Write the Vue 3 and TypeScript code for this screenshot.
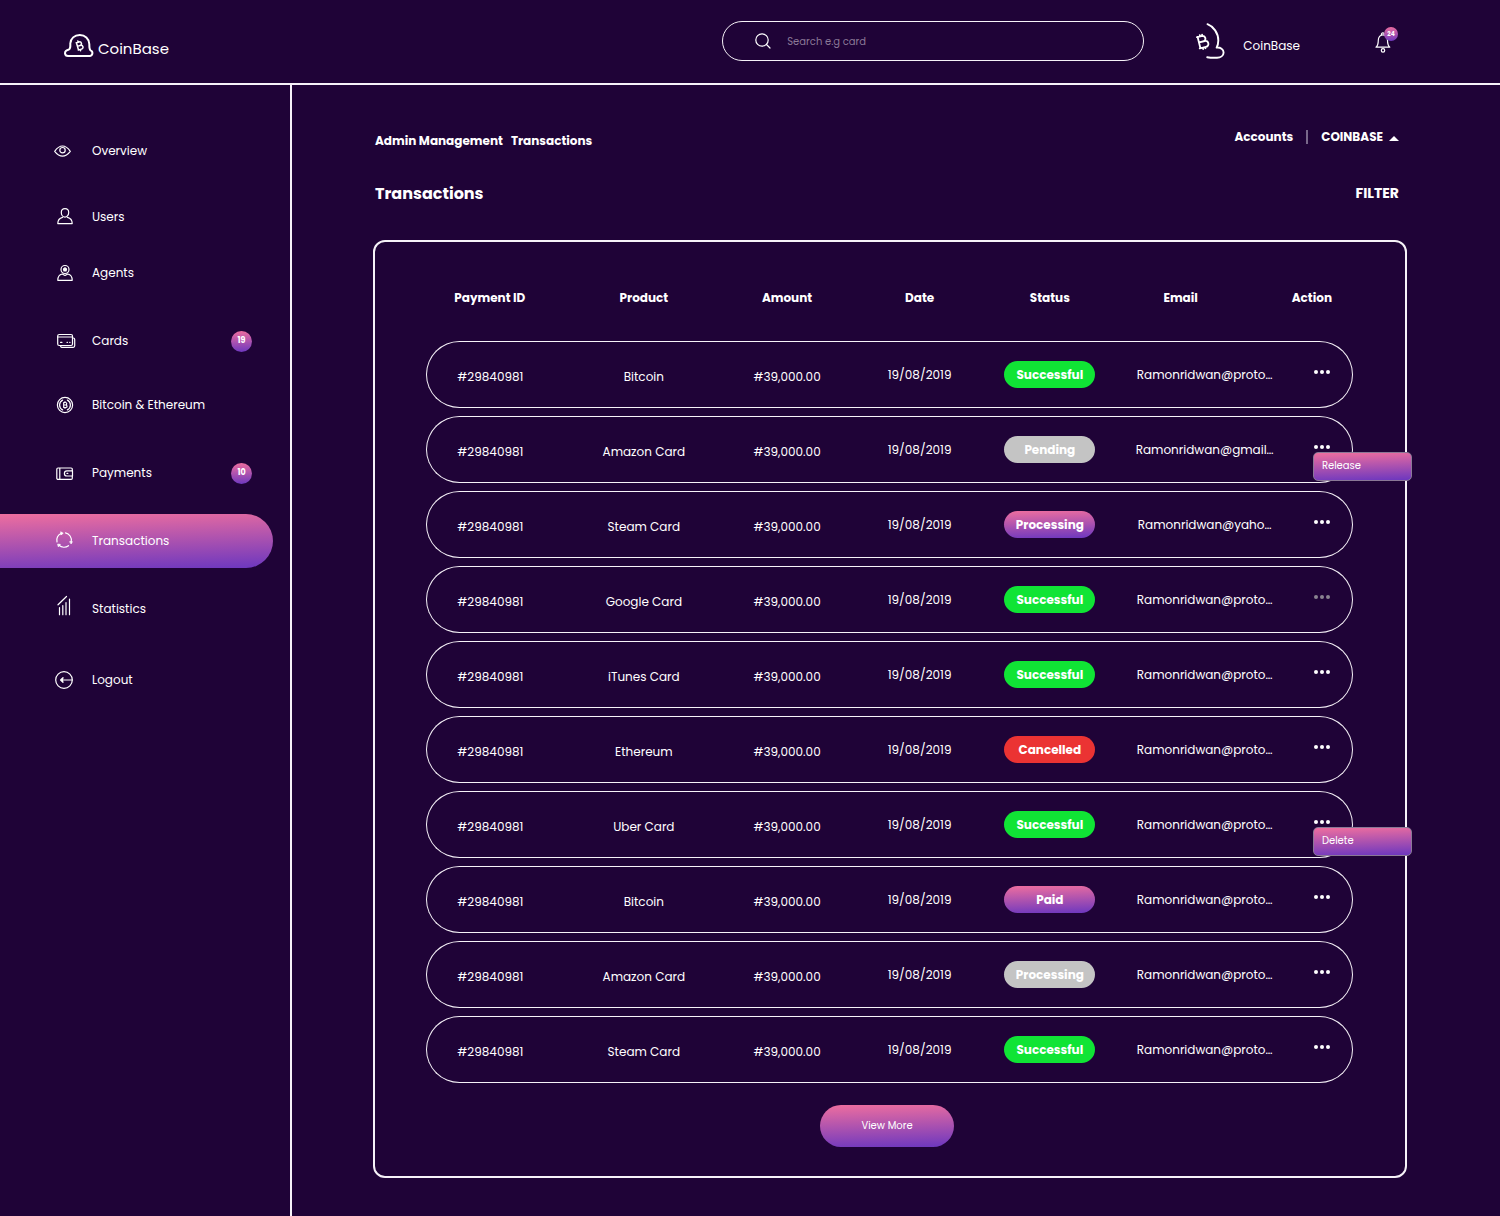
<script setup lang="ts">
import { ref } from 'vue'

type Gap = 'none' | 'tight' | 'snug' | 'normal' | 'wide' | 'far'
type Tone = 'green' | 'grey' | 'brand' | 'red'

interface NavItem {
  id: string
  label: string
  gap: Gap
  count?: number
}

interface Transaction {
  product: string
  status: string
  tone: Tone
  email?: string
  dim?: boolean
  menu?: string
}

const navItems: NavItem[] = [
  { id: 'overview', label: 'Overview', gap: 'none' },
  { id: 'users', label: 'Users', gap: 'normal' },
  { id: 'agents', label: 'Agents', gap: 'tight' },
  { id: 'cards', label: 'Cards', gap: 'wide', count: 19 },
  { id: 'bitcoin', label: 'Bitcoin & Ethereum', gap: 'snug' },
  { id: 'payments', label: 'Payments', gap: 'wide', count: 10 },
  { id: 'transactions', label: 'Transactions', gap: 'wide' },
  { id: 'statistics', label: 'Statistics', gap: 'wide' },
  { id: 'logout', label: 'Logout', gap: 'far' },
]

const active = ref('transactions')
const search = ref('')

const columns = ['Payment ID', 'Product', 'Amount', 'Date', 'Status', 'Email', 'Action']

const rows: Transaction[] = [
  { product: 'Bitcoin', status: 'Successful', tone: 'green' },
  { product: 'Amazon Card', status: 'Pending', tone: 'grey', email: 'Ramonridwan@gmail…', menu: 'Release' },
  { product: 'Steam Card', status: 'Processing', tone: 'brand', email: 'Ramonridwan@yaho…' },
  { product: 'Google Card', status: 'Successful', tone: 'green', dim: true },
  { product: 'iTunes Card', status: 'Successful', tone: 'green' },
  { product: 'Ethereum', status: 'Cancelled', tone: 'red' },
  { product: 'Uber Card', status: 'Successful', tone: 'green', menu: 'Delete' },
  { product: 'Bitcoin', status: 'Paid', tone: 'brand' },
  { product: 'Amazon Card', status: 'Processing', tone: 'grey' },
  { product: 'Steam Card', status: 'Successful', tone: 'green' },
]
</script>

<template>
  <div class="app">
    <header class="topbar">
      <a class="logo" href="#">
        <svg width="30" height="24" viewBox="0 0 30 24" fill="none" stroke="currentColor" stroke-linecap="round" stroke-linejoin="round" aria-hidden="true">
          <path stroke-width="2" d="M4 22H26A3 3 0 0 0 26.6 16.3C25 15.4 25.5 13 25.3 10C25 4.5 21 1 15.8 1C10.5 1 6.5 4.5 6.3 9.5C6.3 11.5 6.8 14.500 5 15.500C2.500 16 1 17.500 1 19.300C1.200 21 2.500 22 4 22Z" />
          <g transform="translate(15.400 11.800) rotate(-16)" stroke-width="1.500">
            <path d="M-2.200 -3.800H.8A1.800 1.800 0 0 1 .8 -.1H-1.600H1.200A1.900 1.900 0 0 1 1.200 3.800H-2.200M-2 -3.800V3.800M-.2 -5V-3.800M-.2 3.800V5" />
          </g>
        </svg>
        <span>CoinBase</span>
      </a>

      <form class="search" role="search" @submit.prevent>
        <label for="search" aria-label="Search">
          <svg width="16" height="16" viewBox="0 0 16 16" fill="none" stroke="currentColor" stroke-width="1.2" stroke-linecap="round" aria-hidden="true">
            <circle cx="7" cy="7" r="6.2" />
            <path d="M11.5 11.5L15 15" />
          </svg>
        </label>
        <input id="search" v-model="search" type="search" placeholder="Search e.g card" />
      </form>

      <a class="profile" href="#">
        <svg width="29" height="36" viewBox="0 0 29 36" fill="none" stroke="currentColor" stroke-linecap="round" stroke-linejoin="round" aria-hidden="true">
          <path stroke-width="1.9" d="M11.500 1.200C17.500 3.500 22.300 10 22.300 17.500C22.300 20.500 21.800 22.500 20.600 24.600C24.500 24.200 27.600 26.200 27.600 29.500C27.600 32.800 24.500 34.700 21 34.700C17 34.900 14 34.700 11.200 34.200" />
          <g transform="translate(6.800 18.700) rotate(-14)" stroke-width="1.800">
            <path d="M-4.600 -5.800H1.200A2.900 2.900 0 0 1 1.200 -.2H-3.600H2A3 3 0 0 1 2 5.800H-4.600M-3.900 -5.800V5.800M-1.400 -7.200V-5.800M1 -7V-5.800M-1.400 5.800V7.200M1 5.800V7" />
          </g>
        </svg>
        <span>CoinBase</span>
      </a>

      <button class="bell" type="button" aria-label="Notifications">
        <svg width="16" height="22" viewBox="0 0 16 22" fill="none" stroke="currentColor" stroke-width="1.200" stroke-linecap="round" stroke-linejoin="round" aria-hidden="true">
          <path d="M1 16.200C3 14.500 3.300 12.500 3.300 9.200C3.300 6 5.200 3.800 8 3.800C10.800 3.800 12.500 6 12.500 9.200C12.500 12.500 12.900 14.500 14.800 16.200Z" />
          <path d="M6.500 3.900A1.500 1.500 0 1 1 9.300 3.900" />
          <circle cx="8" cy="19.400" r="1.700" />
        </svg>
        <span class="bell-count">24</span>
      </button>
    </header>

    <div class="body">
      <nav class="sidebar" aria-label="Main">
        <ul>
          <li v-for="item in navItems" :key="item.id" :class="`gap-${item.gap}`">
            <a href="#" class="nav-link" :class="{ active: active === item.id }" @click.prevent="active = item.id">
              <svg width="24" height="24" viewBox="0 0 24 24" fill="none" stroke="currentColor" stroke-width="1.200" stroke-linecap="round" stroke-linejoin="round" aria-hidden="true">
                <template v-if="item.id === 'overview'">
                  <path d="M1.700 12.300C4 9 6.500 7 9.500 7C12.500 7 15 9 17.300 12.300C15 15.300 12.500 17.200 9.500 17.200C6.500 17.200 4 15.300 1.700 12.300Z" />
                  <circle cx="9.500" cy="11.200" r="2.700" />
                </template>
                <template v-else-if="item.id === 'users'">
                  <path d="M12 3.600C14.200 3.600 15.700 5.200 15.700 7.500C15.700 9.800 14.200 12.200 12 12.200C9.800 12.200 8.300 9.800 8.300 7.500C8.300 5.200 9.800 3.600 12 3.600Z" />
                  <path d="M9.500 12.300C6.500 13 4.800 15 4.800 18.600H19.200C19.200 15 17.500 13 14.500 12.300" />
                </template>
                <template v-else-if="item.id === 'agents'">
                  <circle cx="12" cy="8.500" r="4" />
                  <path d="M9.200 13C6.500 13.500 4.800 15.500 4.800 19.300H19.200C19.200 15.500 17.500 13.500 14.800 13M9.200 13L12 14.500L14.800 13" />
                  <path d="M12 6.800L13.500 8L13 10H11L10.500 8Z" fill="currentColor" />
                </template>
                <template v-else-if="item.id === 'cards'">
                  <rect x="4.700" y="5.500" width="14.800" height="11" rx="1.500" />
                  <path d="M4.700 8H19.500M19.600 9H20.200A1.500 1.500 0 0 1 21.700 10.500V16.800A1.500 1.500 0 0 1 20.200 18.300H8.700A1.500 1.500 0 0 1 7.500 16.800M7.500 13.300H9M14 13.300H14.500M16.700 13.300H17" />
                </template>
                <template v-else-if="item.id === 'bitcoin'">
                  <circle cx="12" cy="12" r="7.600" />
                  <path d="M9.600 7.100A5.500 5.500 0 0 0 9.600 16.900M14.400 7.100A5.500 5.500 0 0 1 14.400 16.900" />
                  <path d="M10.700 9.500H12.500A1.200 1.200 0 0 1 12.500 12H10.700H12.800A1.250 1.250 0 0 1 12.800 14.500H10.700V9.500M12 8.700V9.500M12 14.500V15.300" />
                </template>
                <template v-else-if="item.id === 'payments'">
                  <path d="M19.300 9.700V8.200A1.200 1.200 0 0 0 18.100 7H5A1.200 1.200 0 0 0 3.800 8.200V17.200A1.200 1.200 0 0 0 5 18.400H18.100A1.200 1.200 0 0 0 19.300 17.200V15M6.800 7V18.400" />
                  <path d="M19.500 9.800H14A2.600 2.600 0 0 0 14 15H19.500ZM14 12.400H14.800" />
                </template>
                <template v-else-if="item.id === 'transactions'">
                  <path d="M8.500 4.200A7.300 7.300 0 0 0 4 13M6 16.300A7.300 7.300 0 0 0 15.500 16.700M18.200 12.500A7.300 7.300 0 0 0 12.500 3.900" />
                  <path fill="currentColor" stroke-width=".8" d="M8 3L10.200 4.300L8.200 5.700ZM5 15.200L7.300 15.400L5.600 17.500ZM17 12.700H19.300L18.300 14.600Z" />
                </template>
                <template v-else-if="item.id === 'statistics'">
                  <path d="M6.500 10.500V17.700M9.800 8.500V17.700M13 5.500V17.700M16.500 2V17.700M5 7.800L13.500 -.5" />
                </template>
                <template v-else>
                  <circle cx="11" cy="12" r="8.300" />
                  <path d="M19 12H8.500" />
                  <path fill="currentColor" d="M10 9.600L7.600 12L10 14.400L9.400 12Z" />
                </template>
              </svg>
              <span class="nav-label">{{ item.label }}</span>
              <span v-if="item.count" class="nav-count">{{ item.count }}</span>
            </a>
          </li>
        </ul>
      </nav>

      <main class="main">
        <div class="crumb-row">
          <nav class="crumbs" aria-label="Breadcrumb">
            <a href="#">Admin Management</a>
            <a href="#">Transactions</a>
          </nav>
          <div class="account">
            <a href="#">Accounts</a>
            <span class="divider"></span>
            <button type="button" aria-haspopup="true">
              COINBASE
              <svg width="10" height="5" viewBox="0 0 10 5" fill="currentColor" aria-hidden="true"><path d="M5 0L10 5H0Z" /></svg>
            </button>
          </div>
        </div>

        <div class="title-row">
          <h1>Transactions</h1>
          <button type="button">FILTER</button>
        </div>

        <section class="card">
          <table>
            <colgroup>
              <col class="c-id" /><col class="c-product" /><col class="c-amount" /><col class="c-date" />
              <col class="c-status" /><col class="c-email" /><col class="c-action" />
            </colgroup>
            <thead>
              <tr>
                <th v-for="column in columns" :key="column" scope="col">{{ column }}</th>
              </tr>
            </thead>
            <tbody>
              <tr v-for="(row, index) in rows" :key="index">
                <td class="low">#29840981</td>
                <td class="low">{{ row.product }}</td>
                <td class="low">#39,000.00</td>
                <td>19/08/2019</td>
                <td><span class="status" :class="row.tone">{{ row.status }}</span></td>
                <td>{{ row.email ?? 'Ramonridwan@proto…' }}</td>
                <td class="action">
                  <div class="action-box">
                    <button class="dots" :class="{ dim: row.dim }" type="button" aria-label="Row actions">
                      <svg width="18" height="6" viewBox="0 0 18 6" fill="currentColor" aria-hidden="true">
                        <circle cx="3" cy="3" r="2" /><circle cx="9" cy="3" r="2" /><circle cx="15" cy="3" r="2" />
                      </svg>
                    </button>
                    <button v-if="row.menu" class="menu" type="button">{{ row.menu }}</button>
                  </div>
                </td>
              </tr>
            </tbody>
          </table>
          <div class="more">
            <button type="button">View More</button>
          </div>
        </section>
      </main>
    </div>
  </div>
</template>

<style>
body {
  margin: 0;
  background: #1f0337;
}
</style>

<style scoped>
.app {
  --line: #f6f2f8;
  --brand: linear-gradient(178deg, #ee6e9f, #6c37bf);
  display: flex;
  flex-direction: column;
  min-height: 100vh;
  color: #fff;
  background: #1f0337;
  font-family: Poppins, Inter, "Liberation Sans", sans-serif;
  font-size: 12px;
  line-height: 20px;
}

*,
*::before,
*::after {
  box-sizing: border-box;
}

a {
  color: inherit;
  text-decoration: none;
}

button {
  padding: 0;
  border: 0;
  color: inherit;
  background: none;
  font: inherit;
  cursor: pointer;
}

svg {
  display: block;
  flex: none;
  overflow: visible;
}

.topbar {
  display: flex;
  align-items: center;
  height: 85px;
  padding: 0 102px 1px 64px;
  border-bottom: 2px solid var(--line);
}

.logo {
  display: flex;
  align-items: center;
  gap: 4px;
  padding-top: 10px;
  font-size: 15px;
}

.logo span {
  padding-top: 6px;
}

.search {
  display: flex;
  align-items: center;
  gap: 16px;
  width: 422px;
  height: 40px;
  margin-left: auto;
  padding: 0 32px;
  border: 1px solid var(--line);
  border-radius: 20px;
}

.search input {
  flex: 1;
  min-width: 0;
  padding: 2px 0 0;
  border: 0;
  outline: 0;
  color: inherit;
  background: none;
  font: inherit;
  font-size: 10px;
}

.search input::placeholder {
  color: #8a7896;
  opacity: 1;
}

.profile {
  display: flex;
  align-items: center;
  gap: 18px;
  margin-left: 52px;
}

.profile span {
  padding-top: 10px;
}

.bell {
  position: relative;
  width: 23px;
  margin-left: 75px;
  padding-top: 2px;
}

.bell-count {
  position: absolute;
  top: -2px;
  right: 0;
  width: 14px;
  height: 14px;
  border-radius: 50%;
  background: var(--brand);
  font-size: 6px;
  font-weight: 700;
  line-height: 14px;
  text-align: center;
}

.body {
  display: flex;
  flex: 1;
}

.sidebar {
  flex: none;
  width: 292px;
  padding: 39px 17px 0 0;
  border-right: 2px solid var(--line);
}

.sidebar ul {
  margin: 0;
  padding: 0;
  list-style: none;
}

.gap-tight {
  margin-top: 2px;
}

.gap-snug {
  margin-top: 10px;
}

.gap-normal {
  margin-top: 12px;
}

.gap-wide {
  margin-top: 14px;
}

.gap-far {
  margin-top: 17px;
}

.nav-link {
  display: flex;
  align-items: center;
  gap: 15px;
  height: 54px;
  padding: 0 21px 0 53px;
  border-radius: 0 27px 27px 0;
}

.nav-link.active {
  background: var(--brand);
}

.nav-label {
  flex: 1;
}

.nav-count {
  width: 21px;
  height: 21px;
  border-radius: 50%;
  background: var(--brand);
  font-size: 8px;
  font-weight: 700;
  line-height: 20px;
  text-align: center;
}

.main {
  flex: 1;
  min-width: 0;
  padding: 42px 93px 38px 81px;
}

.crumb-row,
.title-row {
  display: flex;
  justify-content: space-between;
  padding: 0 8px 0 2px;
  font-weight: 700;
}

.crumbs {
  display: flex;
  gap: 8px;
  padding-top: 4px;
}

.account {
  display: flex;
  align-items: center;
  gap: 13px;
  height: 20px;
}

.account button {
  display: flex;
  align-items: center;
  gap: 6px;
}

.account svg {
  margin-top: 3px;
}

.divider {
  width: 2px;
  height: 14px;
  background: #79688a;
}

.title-row {
  align-items: center;
  height: 24px;
  margin-top: 31px;
}

.title-row button {
  padding-bottom: 2px;
  font-size: 14px;
}

h1 {
  margin: 0;
  font-size: 16px;
  font-weight: 700;
}

.card {
  margin-top: 34px;
  padding: 28px 52px 29px 51px;
  border: 2px solid var(--line);
  border-radius: 12px;
}

table {
  width: 100%;
  table-layout: fixed;
  border-collapse: separate;
  border-spacing: 0 8px;
  text-align: center;
}

.c-id {
  width: 15.6%;
}

.c-product {
  width: 15.8%;
}

.c-amount {
  width: 15.1%;
}

.c-date {
  width: 13.5%;
}

.c-status {
  width: 14.6%;
}

.c-email {
  width: 18.8%;
}

.c-action {
  width: 6.6%;
}

th {
  height: 55px;
  padding: 10px 0 0;
  font-weight: 700;
  vertical-align: top;
}

th:nth-child(6) {
  padding-right: 48px;
}

th:last-child {
  padding-right: 22px;
}

td {
  height: 67px;
  padding: 0;
  border: solid var(--line);
  border-width: 1px 0;
  white-space: nowrap;
}

td.low {
  padding-top: 4px;
}

th:first-child,
td:first-child {
  padding-right: 17px;
}

td:first-child {
  border-left-width: 1px;
  border-radius: 34px 0 0 34px;
}

td:last-child {
  border-right-width: 1px;
  border-radius: 0 34px 34px 0;
}

.status {
  display: block;
  width: 91px;
  height: 27px;
  margin: 0 auto;
  border-radius: 14px;
  font-weight: 700;
  line-height: 27px;
}

.green {
  background: #10e435;
}

.grey {
  background: #c4c4c4;
}

.red {
  background: #eb3333;
}

.brand,
.menu,
.more button {
  background: var(--brand);
}

td.action {
  padding-bottom: 6px;
}

.action-box {
  position: relative;
  width: 18px;
  margin: 0 auto;
}

.dots {
  display: block;
}

.dim {
  color: #8a8390;
}

.menu {
  position: absolute;
  top: 8px;
  left: 0;
  z-index: 1;
  width: 99px;
  height: 29px;
  padding: 0 8px;
  border: 1px solid #8a7896;
  border-radius: 5px;
  font-size: 10px;
  text-align: left;
}

.more {
  display: flex;
  justify-content: center;
  margin-top: 14px;
  padding-right: 5px;
}

.more button {
  width: 134px;
  height: 42px;
  border-radius: 21px;
  font-size: 10px;
}
</style>
